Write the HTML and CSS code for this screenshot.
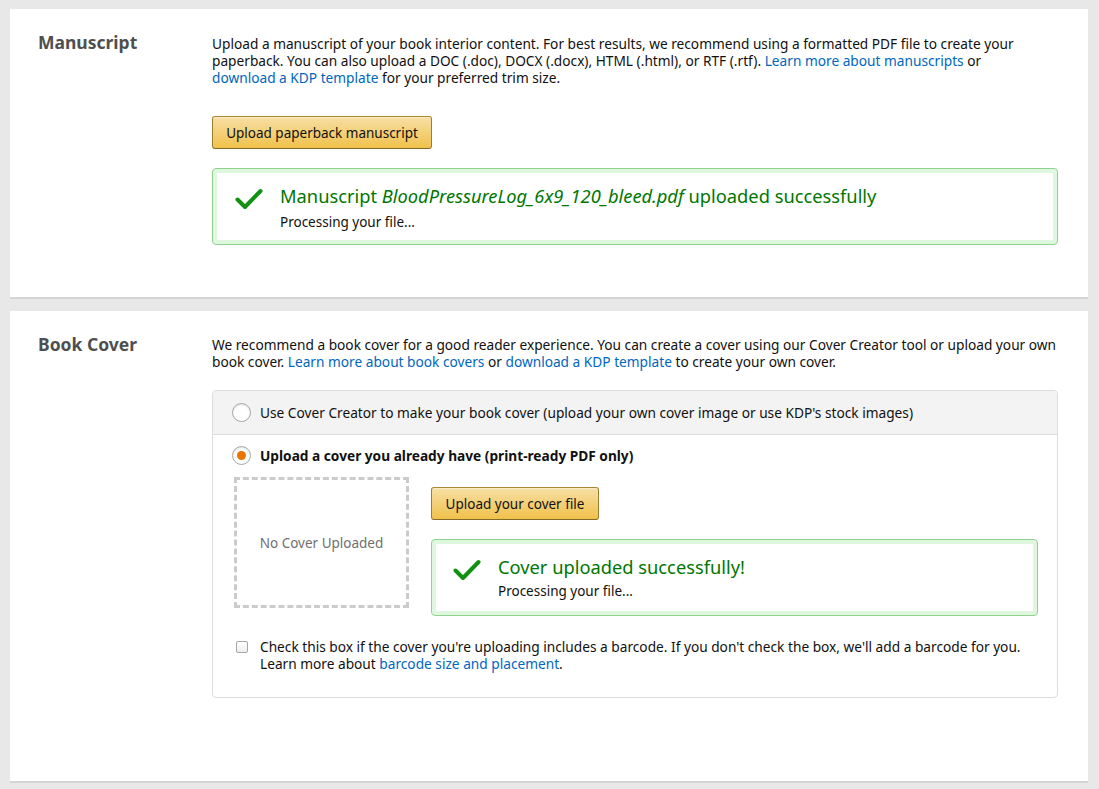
FILE: index.html
```html
<!DOCTYPE html>
<html>
<head>
<meta charset="utf-8">
<link rel="stylesheet" href="styles.css">
</head>
<body>
<div class="page">
  <section class="card card-ms">
    <h2 class="card-title">Manuscript</h2>
    <div class="card-body">
      <p class="desc">Upload a manuscript of your book interior content. For best results, we recommend using a formatted PDF file to create your<br>paperback. You can also upload a DOC (.doc), DOCX (.docx), HTML (.html), or RTF (.rtf). <a href="#">Learn more about manuscripts</a> or<br><a href="#">download a KDP template</a> for your preferred trim size.</p>
      <button class="btn btn-ms">Upload paperback manuscript</button>
      <div class="success success-ms">
        <svg class="check" width="28" height="22" viewBox="0 0 28 22"><path d="M2.5 11.5 L10 19 L25.5 3" fill="none" stroke="#119111" stroke-width="4" stroke-linecap="round" stroke-linejoin="round"/></svg>
        <div class="success-text">
          <div class="success-title">Manuscript <i>BloodPressureLog_6x9_120_bleed.pdf</i> uploaded successfully</div>
          <div class="success-sub">Processing your file...</div>
        </div>
      </div>
    </div>
  </section>
  <section class="card card-cover">
    <h2 class="card-title">Book Cover</h2>
    <div class="card-body">
      <p class="desc">We recommend a book cover for a good reader experience. You can create a cover using our Cover Creator tool or upload your own<br>book cover. <a href="#">Learn more about book covers</a> or <a href="#">download a KDP template</a> to create your own cover.</p>
      <div class="panel">
        <div class="opt opt-creator">
          <span class="radio"></span>
          <span>Use Cover Creator to make your book cover (upload your own cover image or use KDP's stock images)</span>
        </div>
        <div class="opt-upload">
          <div class="opt opt-own">
            <span class="radio radio-on"></span>
            <b>Upload a cover you already have (print-ready PDF only)</b>
          </div>
          <div class="upload-row">
            <div class="placeholder">No Cover Uploaded</div>
            <div class="upload-side">
              <button class="btn btn-cover">Upload your cover file</button>
              <div class="success success-cover">
                <svg class="check" width="28" height="22" viewBox="0 0 28 22"><path d="M2.5 11.5 L10 19 L25.5 3" fill="none" stroke="#119111" stroke-width="4" stroke-linecap="round" stroke-linejoin="round"/></svg>
                <div class="success-text">
                  <div class="success-title">Cover uploaded successfully!</div>
                  <div class="success-sub">Processing your file...</div>
                </div>
              </div>
            </div>
          </div>
          <div class="barcode">
            <span class="checkbox"></span>
            <span>Check this box if the cover you're uploading includes a barcode. If you don't check the box, we'll add a barcode for you.<br>Learn more about <a href="#">barcode size and placement</a>.</span>
          </div>
        </div>
      </div>
    </div>
  </section>
</div>
</body>
</html>
```
FILE: styles.css
```css
* { box-sizing: border-box; }
html, body { margin: 0; padding: 0; }
body {
  background: #e8e8e8;
  font-family: "Noto Sans", "Liberation Sans", sans-serif;
  font-size: 13.7px;
  color: #111;
  width: 1099px;
  height: 789px;
  overflow: hidden;
}
.page {
  padding: 9px 11px 0 10px;
  display: flex;
  flex-direction: column;
  gap: 12px;
}
.card {
  background: #fff;
  border-bottom: 2px solid #d5d5d5;
  display: flex;
  padding: 0 30px 0 28px;
}
.card-ms { height: 290px; padding-top: 24px; }
.card-cover { height: 472px; padding-top: 24px; }
.card-title {
  margin: 0;
  width: 174px;
  flex: none;
  font-size: 17.5px;
  font-weight: bold;
  color: #4f4f4f;
  line-height: 18px;
}
.card-body { flex: 1; }
.desc {
  margin: 0;
  line-height: 17px;
  padding-top: 2px;
  white-space: nowrap;
}
.card-cover .desc { padding-top: 1px; }
a { color: #0066c0; text-decoration: none; }
.btn {
  display: block;
  font-family: inherit;
  font-size: 13.5px;
  color: #111;
  height: 33px;
  padding: 0 13px;
  border: 1px solid;
  border-color: #a88734 #9c7e31 #846a29;
  border-radius: 3px;
  background: linear-gradient(to bottom, #f7dfa5, #f0c14b);
  box-shadow: inset 0 1px 0 rgba(255,255,255,.4);
}
.btn-ms { margin-top: 30px; width: 220px; }
.success {
  display: flex;
  border: 1px solid #8fd18f;
  border-radius: 4px;
  box-shadow: inset 0 0 0 4px #dff7df;
  background: #fff;
}
.success-ms { margin-top: 19px; height: 77px; padding: 16px 20px 0 22px; }
.success-ms .success-sub { margin-top: 7px; }
.check { flex: none; margin-right: 17px; margin-top: 3px; }
.success-title {
  font-size: 18.3px;
  color: #007600;
  line-height: 22px;
}
.success-sub { line-height: 17px; margin-top: 5px; font-size: 13.5px; }
.panel {
  margin-top: 20px;
  border: 1px solid #ddd;
  border-radius: 4px;
  height: 308px;
}
.opt { display: flex; align-items: center; }
.opt-creator {
  height: 44px;
  background: #f3f3f3;
  border-bottom: 1px solid #ddd;
  padding-left: 19px;
  border-radius: 4px 4px 0 0;
}
.radio {
  width: 19px;
  height: 19px;
  border-radius: 50%;
  border: 1px solid #a6a6a6;
  background: #fff;
  margin-right: 9px;
  flex: none;
  box-shadow: inset 0 1px 2px rgba(0,0,0,.12);
  display: flex;
  align-items: center;
  justify-content: center;
}
.radio-on::after {
  content: "";
  width: 9px;
  height: 9px;
  border-radius: 50%;
  background: #e77600;
}
.opt-upload { padding: 0 0 0 20px; }
.opt-own { height: 40px; margin-left: -1px; }
.opt-own b { font-weight: bold; }
.upload-row { display: flex; margin-top: 2px; }
.placeholder {
  width: 175px;
  height: 131px;
  border: 3px dashed #cbcbcb;
  display: flex;
  align-items: center;
  justify-content: center;
  color: #6f6f6f;
  flex: none;
  margin-left: 1px;
  font-size: 13.5px;
}
.upload-side { margin-left: 22px; flex: 1; padding-right: 19px; }
.btn-cover { margin-top: 10px; width: 168px; }
.success-cover { margin-top: 19px; height: 77px; padding: 16px 20px 0 21px; }
.barcode {
  display: flex;
  margin-top: 22px;
  line-height: 17px;
  padding-left: 3px;
}
.checkbox {
  width: 12px;
  height: 12px;
  border: 1px solid #a6a6a6;
  border-radius: 2px;
  background: linear-gradient(#fff, #eee);
  margin: 3px 12px 0 0;
  flex: none;
}
```
